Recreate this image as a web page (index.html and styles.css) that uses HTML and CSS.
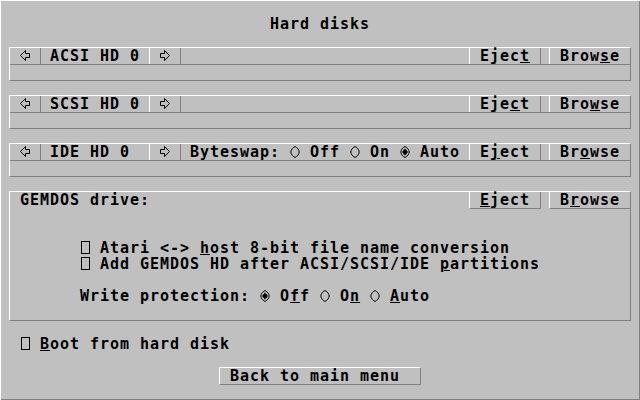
FILE: index.html
```html
<!DOCTYPE html>
<html>
<head>
<meta charset="utf-8">
<link rel="stylesheet" href="styles.css">
</head>
<body>
<div class="dialog">
  <div class="title">Hard disks</div>

  <div class="box drive">
    <div class="bar">
      <div class="btn arrow first"><svg class="ico" viewBox="0 0 10 16"><path d="M0.5 7.5 L5.5 2.5 V5.5 H9.5 V9.5 H5.5 V12.5 Z"/></svg></div>
      <div class="label">ACSI HD 0</div>
      <div class="btn arrow"><svg class="ico" viewBox="0 0 10 16"><path d="M9.5 7.5 L4.5 2.5 V5.5 H0.5 V9.5 H4.5 V12.5 Z"/></svg></div>
      <div class="fill"></div>
      <div class="btn eject">Ejec<u>t</u></div>
      <div class="btn browse">Brow<u>s</u>e</div>
    </div>
    <div class="path"></div>
  </div>

  <div class="box drive">
    <div class="bar">
      <div class="btn arrow first"><svg class="ico" viewBox="0 0 10 16"><path d="M0.5 7.5 L5.5 2.5 V5.5 H9.5 V9.5 H5.5 V12.5 Z"/></svg></div>
      <div class="label">SCSI HD 0</div>
      <div class="btn arrow"><svg class="ico" viewBox="0 0 10 16"><path d="M9.5 7.5 L4.5 2.5 V5.5 H0.5 V9.5 H4.5 V12.5 Z"/></svg></div>
      <div class="fill"></div>
      <div class="btn eject">Eje<u>c</u>t</div>
      <div class="btn browse">Bro<u>w</u>se</div>
    </div>
    <div class="path"></div>
  </div>

  <div class="box drive">
    <div class="bar">
      <div class="btn arrow first"><svg class="ico" viewBox="0 0 10 16"><path d="M0.5 7.5 L5.5 2.5 V5.5 H9.5 V9.5 H5.5 V12.5 Z"/></svg></div>
      <div class="label">IDE HD 0</div>
      <div class="btn arrow"><svg class="ico" viewBox="0 0 10 16"><path d="M9.5 7.5 L4.5 2.5 V5.5 H0.5 V9.5 H4.5 V12.5 Z"/></svg></div>
      <div class="fill opts">
        <span>Byteswap:</span>
        <svg class="ico" viewBox="0 0 10 16"><path d="M5 2.5 C-0.5 5.5 -0.5 10.5 5 13.5 C10.5 10.5 10.5 5.5 5 2.5Z"/></svg>
        <span>Off</span>
        <svg class="ico" viewBox="0 0 10 16"><path d="M5 2.5 C-0.5 5.5 -0.5 10.5 5 13.5 C10.5 10.5 10.5 5.5 5 2.5Z"/></svg>
        <span>On</span>
        <svg class="ico" viewBox="0 0 10 16"><path d="M5 2.5 C-0.5 5.5 -0.5 10.5 5 13.5 C10.5 10.5 10.5 5.5 5 2.5Z"/><path class="dot" d="M5 4.5 L8 8 L5 11.5 L2 8Z"/></svg>
        <span>Auto</span>
      </div>
      <div class="btn eject">E<u>j</u>ect</div>
      <div class="btn browse">Br<u>o</u>wse</div>
    </div>
    <div class="path"></div>
  </div>

  <div class="box gemdos">
    <div class="ghead">
      <div class="gtitle">GEMDOS drive:</div>
      <div class="btn eject"><u>E</u>ject</div>
      <div class="btn browse">B<u>r</u>owse</div>
    </div>
    <div class="opt first">
      <svg class="ico" viewBox="0 0 10 16"><rect x="1.5" y="1.5" width="8" height="12"/></svg>
      <span>Atari &lt;-&gt; <u>h</u>ost 8-bit file name conversion</span>
    </div>
    <div class="opt">
      <svg class="ico" viewBox="0 0 10 16"><rect x="1.5" y="1.5" width="8" height="12"/></svg>
      <span>Add GEMDOS HD after ACSI/SCSI/IDE <u>p</u>artitions</span>
    </div>
    <div class="opt wp">
      <span>Write protection:</span>
      <svg class="ico" viewBox="0 0 10 16"><path d="M5 2.5 C-0.5 5.5 -0.5 10.5 5 13.5 C10.5 10.5 10.5 5.5 5 2.5Z"/><path class="dot" d="M5 4.5 L8 8 L5 11.5 L2 8Z"/></svg>
      <span>O<u>f</u>f</span>
      <svg class="ico" viewBox="0 0 10 16"><path d="M5 2.5 C-0.5 5.5 -0.5 10.5 5 13.5 C10.5 10.5 10.5 5.5 5 2.5Z"/></svg>
      <span>O<u>n</u></span>
      <svg class="ico" viewBox="0 0 10 16"><path d="M5 2.5 C-0.5 5.5 -0.5 10.5 5 13.5 C10.5 10.5 10.5 5.5 5 2.5Z"/></svg>
      <span><u>A</u>uto</span>
    </div>
  </div>

  <div class="boot">
    <svg class="ico" viewBox="0 0 10 16"><rect x="1.5" y="1.5" width="8" height="12"/></svg>
    <span><u>B</u>oot from hard disk</span>
  </div>

  <div class="btn back">Back to main menu</div>
</div>
</body>
</html>
```
FILE: styles.css
```css
html, body {
  margin: 0;
  padding: 0;
  background: #c0c0c0;
}

body {
  font-family: "DejaVu Sans Mono", monospace;
  font-size: 15px;
  font-weight: bold;
  letter-spacing: 0.97px;
  line-height: 16px;
  color: #000;
}

.dialog {
  width: 640px;
  height: 400px;
  box-sizing: border-box;
  background: #c0c0c0;
  box-shadow: inset 1px 1px 0 #fff, inset -1px -1px 0 #808080;
  display: flex;
  flex-direction: column;
  white-space: nowrap;
  overflow: hidden;
}

.title {
  margin-top: 16px;
  height: 16px;
  text-align: center;
  flex: none;
}

.box {
  box-sizing: border-box;
  margin-left: 9px;
  width: 622px;
  border-top: 1px solid #fff;
  border-left: 1px solid #fff;
  border-bottom: 1px solid #808080;
  border-right: 1px solid #808080;
  flex: none;
}

.drive {
  height: 34px;
  margin-top: 14px;
}

.title + .drive {
  margin-top: 15px;
}

.bar {
  display: flex;
  height: 17px;
  box-sizing: border-box;
  border-bottom: 1px solid #808080;
}

.path {
  height: 15px;
}

.btn {
  box-sizing: border-box;
  border-left: 1px solid #fff;
  border-right: 1px solid #808080;
  padding-left: 10px;
  height: 16px;
  flex: none;
}

.arrow {
  width: 32px;
}

.arrow.first {
  width: 31px;
  border-left: none;
}

.label {
  width: 108px;
  padding-left: 9px;
  box-sizing: border-box;
  flex: none;
}

.fill {
  flex: 1;
}

.eject {
  width: 72px;
}

.browse {
  width: 81px;
  margin-left: 8px;
  border-right: none;
}

.opts {
  display: flex;
  gap: 10px;
  padding-left: 9px;
}

.ico {
  width: 10px;
  height: 16px;
  flex: none;
  display: block;
}

.ico path,
.ico rect {
  fill: none;
  stroke: #000;
  stroke-width: 1;
}

.ico path.dot {
  fill: #000;
  stroke: none;
}

u {
  text-decoration-thickness: 1px;
  text-underline-offset: 1px;
}

.gemdos {
  height: 130px;
  margin-top: 14px;
}

.ghead {
  display: flex;
  align-items: flex-start;
  height: 17px;
}

.ghead .btn {
  height: 17px;
  border-bottom: 1px solid #808080;
}

.gtitle {
  flex: 1;
  height: 16px;
  padding-left: 10px;
}

.opt {
  display: flex;
  gap: 10px;
  height: 16px;
  padding-left: 70px;
}

.opt.first {
  margin-top: 31px;
}

.opt.wp {
  margin-top: 16px;
}

.boot {
  display: flex;
  gap: 10px;
  height: 16px;
  margin-top: 15px;
  padding-left: 20px;
  flex: none;
}

.back {
  margin-top: 15px;
  margin-left: 219px;
  width: 202px;
  height: 18px;
  border-top: 1px solid #fff;
  border-bottom: 1px solid #808080;
}
```
